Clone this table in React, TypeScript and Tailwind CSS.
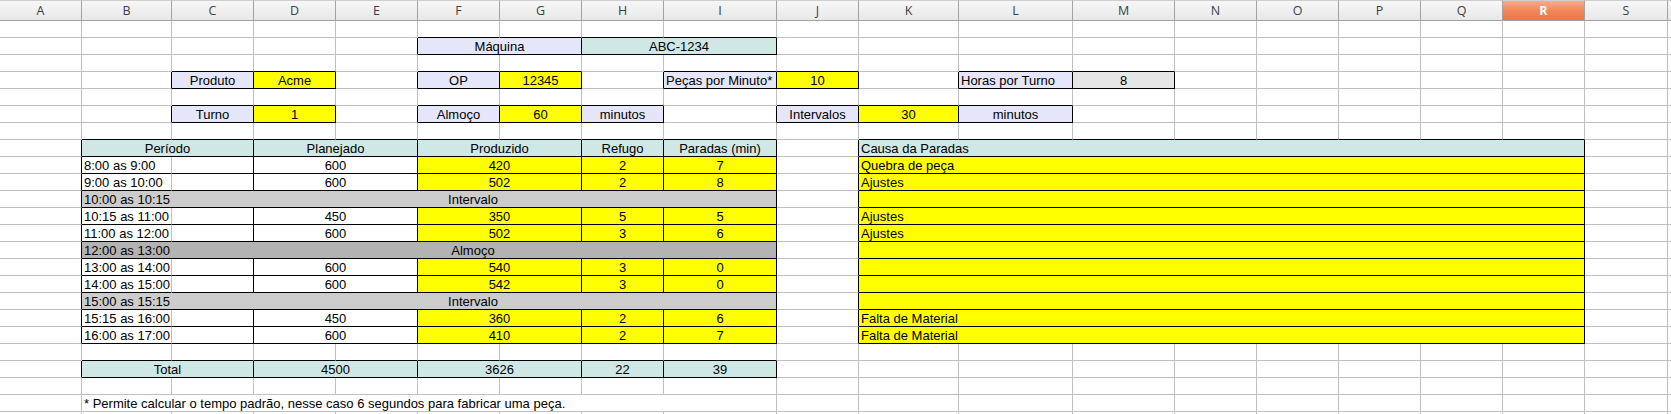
const WIDTHS = [82, 90, 82, 82, 82, 82, 82, 82, 113, 82, 100, 114, 102, 82, 82, 82, 82, 82, 83, 82];
// last column (T) is only a sliver at the right edge, no label visible
const LETTERS = "ABCDEFGHIJKLMNOPQRS".split("").concat([""]);
const SELECTED = 17;

type Cell = {
  c: number;
  span?: number;
  text?: string;
  sub?: string;
  align?: "l" | "c";
  bg?: string;
  box?: string;
};

const Y = "bg-[#ffff00]";
const LAV = "bg-[#e6e6fa]";
const TEAL = "bg-[#cfe7e5]";
const GRAY = "bg-[#cccccc]";
const DARK = "bg-[#b3b3b3]";
const LIGHT = "bg-[#e6e6e6]";
const ALL = "ltrb";

const SPAN: Record<number, string> = { 1: "col-span-1", 2: "col-span-2", 8: "col-span-8" };

const box = (c: number, text: string, bg: string, span = 1, align: "l" | "c" = "c"): Cell => ({
  c,
  span,
  text,
  bg,
  align,
  box: ALL,
});

const data = (b: string, d: string, f: string, h: string, i: string, k = ""): Cell[] => [
  { c: 1, text: b, align: "l", box: "ltb" },
  { c: 2, box: "trb" },
  { c: 3, span: 2, text: d, box: ALL },
  box(5, f, Y, 2),
  box(7, h, Y),
  box(8, i, Y),
  box(10, k, Y, 8, "l"),
];

const pause = (b: string, label: string, bg: string): Cell[] => [
  { c: 1, span: 8, text: b, sub: label, bg, box: ALL },
  box(10, "", Y, 8, "l"),
];

const ROWS: Cell[][] = [
  [],
  [box(5, "Máquina", LAV, 2), box(7, "ABC-1234", TEAL, 2)],
  [],
  [
    box(2, "Produto", LAV),
    box(3, "Acme", Y),
    box(5, "OP", LAV),
    box(6, "12345", Y),
    box(8, "Peças por Minuto*", LAV, 1, "l"),
    box(9, "10", Y),
    box(11, "Horas por Turno", LAV, 1, "l"),
    box(12, "8", LIGHT),
  ],
  [],
  [
    box(2, "Turno", LAV),
    box(3, "1", Y),
    box(5, "Almoço", LAV),
    box(6, "60", Y),
    box(7, "minutos", LAV),
    box(9, "Intervalos", LAV),
    box(10, "30", Y),
    box(11, "minutos", LAV),
  ],
  [],
  [
    box(1, "Período", TEAL, 2),
    box(3, "Planejado", TEAL, 2),
    box(5, "Produzido", TEAL, 2),
    box(7, "Refugo", TEAL),
    box(8, "Paradas (min)", TEAL),
    box(10, "Causa da Paradas", TEAL, 8, "l"),
  ],
  data("8:00 as 9:00", "600", "420", "2", "7", "Quebra de peça"),
  data("9:00 as 10:00", "600", "502", "2", "8", "Ajustes"),
  pause("10:00 as 10:15", "Intervalo", GRAY),
  data("10:15 as 11:00", "450", "350", "5", "5", "Ajustes"),
  data("11:00 as 12:00", "600", "502", "3", "6", "Ajustes"),
  pause("12:00 as 13:00", "Almoço", DARK),
  data("13:00 as 14:00", "600", "540", "3", "0"),
  data("14:00 as 15:00", "600", "542", "3", "0"),
  pause("15:00 as 15:15", "Intervalo", GRAY),
  data("15:15 as 16:00", "450", "360", "2", "6", "Falta de Material"),
  data("16:00 as 17:00", "600", "410", "2", "7", "Falta de Material"),
  [],
  [
    box(1, "Total", TEAL, 2),
    box(3, "4500", TEAL, 2),
    box(5, "3626", TEAL, 2),
    box(7, "22", TEAL),
    box(8, "39", TEAL),
  ],
  [],
  [{ c: 1, span: 8, align: "l", text: "* Permite calcular o tempo padrão, nesse caso 6 segundos para fabricar uma peça." }],
  [],
];

function fill(cells: Cell[]): Cell[] {
  const out: Cell[] = [];
  let c = 0;
  for (const cell of [...cells].sort((a, b) => a.c - b.c)) {
    while (c < cell.c) out.push({ c: c++ });
    out.push(cell);
    c = cell.c + (cell.span ?? 1);
  }
  while (c < WIDTHS.length) out.push({ c: c++ });
  return out;
}

const grid = ROWS.map(fill);

// which cell covers each column, per row
const owner = grid.map((row) => {
  const map: Cell[] = [];
  row.forEach((cell) => {
    for (let i = 0; i < (cell.span ?? 1); i++) map[cell.c + i] = cell;
  });
  return map;
});

const has = (cell: Cell | undefined, edge: string) => !!cell?.box?.includes(edge);

function SheetCell({ cell, r }: { cell: Cell; r: number }) {
  const span = cell.span ?? 1;
  const right = has(cell, "r") || has(owner[r][cell.c + span], "l");
  let bottom = has(cell, "b");
  for (let i = 0; i < span; i++) if (has(owner[r + 1]?.[cell.c + i], "t")) bottom = true;

  return (
    <div
      className={`${SPAN[span]} flex items-center px-[2px] whitespace-nowrap border-r border-b ${
        right ? "border-r-black" : "border-r-[#c0c0c0]"
      } ${bottom ? "border-b-black" : "border-b-[#c0c0c0]"} ${cell.bg ?? ""} ${
        cell.align === "l" ? "justify-start" : "justify-center"
      }`}
    >
      {cell.sub ? (
        <>
          <span className="w-[88px] shrink-0">{cell.text}</span>
          <span className="flex-1 text-center">{cell.sub}</span>
        </>
      ) : (
        cell.text
      )}
    </div>
  );
}

export default function App() {
  return (
    <div className="w-[1671px] h-[414px] overflow-hidden bg-white">
      <div className="grid w-max grid-cols-[82px_90px_82px_82px_82px_82px_82px_82px_113px_82px_100px_114px_102px_82px_82px_82px_82px_82px_83px_82px] grid-rows-[21px] auto-rows-[17px] font-['Liberation_Sans',Arial,sans-serif] text-[13px] leading-[15px] text-black">
        {LETTERS.map((l, i) => (
          <div
            key={i}
            className={`flex items-center justify-center border-t border-r border-b border-t-[#cfcfcf] border-r-[#a3a3a3] border-b-[#a3a3a3] font-['Open_Sans',sans-serif] text-[12.5px] ${
              i === SELECTED
                ? "bg-linear-to-b from-[#f7ab8e] via-[#f28759] to-[#ee7442] text-white font-bold"
                : "bg-linear-to-b from-[#f7f7f7] to-[#e8e8e8] text-[#3b3f48]"
            }`}
          >
            {l}
          </div>
        ))}
        {grid.map((row, r) => row.map((cell) => <SheetCell key={`${r}-${cell.c}`} cell={cell} r={r} />))}
      </div>
    </div>
  );
}
